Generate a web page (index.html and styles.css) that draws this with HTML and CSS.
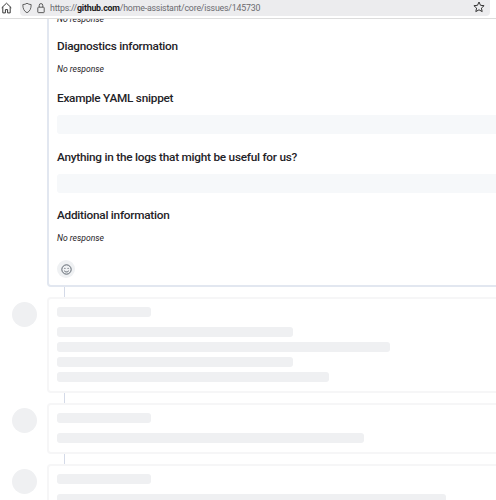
FILE: index.html
```html
<!DOCTYPE html>
<html lang="en">
<head>
<meta charset="utf-8">
<title>Issue 145730</title>
<link rel="stylesheet" href="styles.css">
</head>
<body>
<header class="toolbar">
  <svg class="home" width="11" height="12" viewBox="0 0 11 12" fill="none" stroke="#3a3a3a" stroke-width="1"><path d="M.7 5.800 5.500 1.200l4.800 4.600M1.800 4.900v6h2.600V7.600h2.200v3.300h2.600v-6"/></svg>
  <div class="urlbar">
    <svg class="shield" width="10" height="12" viewBox="0 0 12 13" fill="none" stroke="#555" stroke-width="1.100"><path d="M6 .8c1.300 1 3 1.500 5 1.600 0 4.600-1.300 8-5 9.800C2.300 10.400 1 7 1 2.400 3 2.300 4.700 1.800 6 .8Z"/></svg>
    <svg class="lock" width="8" height="12" viewBox="0 0 10 13" fill="none" stroke="#555" stroke-width="1.200"><rect x="1" y="5.500" width="8" height="6.800" rx=".8"/><path d="M2.800 5.500V3.200a2.200 2.200 0 0 1 4.400 0v2.300"/></svg>
    <span class="url">https://<b>github.com</b>/home-assistant/core/issues/145730</span>
    <svg class="star" width="12" height="12" viewBox="0 0 12 12" fill="none" stroke="#333" stroke-width="1"><path d="m6 1 1.500 3.300 3.600.4-2.700 2.400.8 3.500L6 8.800l-3.200 1.800.8-3.500L.9 4.700l3.600-.4Z"/></svg>
  </div>
</header>
<main class="timeline">
  <article class="card body-card">
    <p class="none clipped">No response</p>
    <h3>Diagnostics information</h3>
    <p class="none">No response</p>
    <h3>Example YAML snippet</h3>
    <div class="code"></div>
    <h3>Anything in the logs that might be useful for us?</h3>
    <div class="code"></div>
    <h3>Additional information</h3>
    <p class="none">No response</p>
    <button class="react" aria-label="Add reaction">
      <svg width="11" height="11" viewBox="0 0 16 16" fill="none" stroke="#57606a" stroke-width="1.400"><circle cx="8" cy="8" r="6.800"/><path d="M5 10.200c.8.900 1.800 1.300 3 1.300s2.200-.4 3-1.300" stroke-linecap="round"/><circle cx="5.700" cy="6.300" r=".9" fill="#57606a" stroke="none"/><circle cx="10.300" cy="6.300" r=".9" fill="#57606a" stroke="none"/></svg>
    </button>
  </article>
  <div class="link"></div>
  <section class="row">
    <div class="avatar"></div>
    <div class="card skel">
      <div class="bar title"></div>
      <div class="lines">
        <div class="bar w236"></div>
        <div class="bar w333"></div>
        <div class="bar w236"></div>
        <div class="bar w272"></div>
      </div>
    </div>
  </section>
  <div class="link"></div>
  <section class="row">
    <div class="avatar"></div>
    <div class="card skel">
      <div class="bar title"></div>
      <div class="lines"><div class="bar w307"></div></div>
    </div>
  </section>
  <div class="link"></div>
  <section class="row">
    <div class="avatar"></div>
    <div class="card skel">
      <div class="bar title"></div>
      <div class="lines"><div class="bar w389"></div></div>
    </div>
  </section>
</main>
</body>
</html>
```
FILE: styles.css
```css
* { box-sizing: border-box; }
html, body { margin: 0; height: 500px; overflow: hidden; background: #fff; }
body { font-family: Roboto, "Noto Sans", sans-serif; color: #1f2328; }
.toolbar {
  position: relative; z-index: 2;
  display: flex; align-items: center; gap: 8px;
  height: 19px; padding: 0 0 3px 1px;
  background: #fff; border-bottom: 1px solid #dcdcdc;
}
.home { flex: none; }
.urlbar {
  flex: 1; display: flex; align-items: center; gap: 5px;
  height: 16px; margin-right: 6px; padding: 0 5px 0 2px;
  background: #ececee; border-radius: 0 0 4px 4px;
}
.shield, .lock { flex: none; }
.url { flex: 1; font: 8.800px Roboto, sans-serif; letter-spacing: -.2px; color: #6a6a6e; white-space: nowrap; overflow: hidden; }
.url b { color: #1c1b22; font-weight: 700; }
.star { flex: none; margin-top: -1px; }
.timeline { height: 492px; margin-top: -11px; padding-left: 47px; overflow: hidden; }
.card { background: #fff; border: 1px solid #e4e7ee; border-radius: 4px; width: 489px; }
.body-card { padding: 0 8px; border-width: 0 1px 2px 2px; border-color: #e2e7f0; height: 279px; border-radius: 0 0 4px 4px; }
.body-card h3 { margin: 0; font-size: 11.800px; line-height: 18px; font-weight: 500; letter-spacing: -.25px; color: #1f2328; }
.none { margin: 0 0 13px; font-size: 8.600px; line-height: 13px; font-style: italic; color: #1f2328; }
.clipped { padding-top: 5px; margin-bottom: 11px; }
h3 + .none { margin-top: 8px; }
h3 + .code { margin-top: 8px; }
.code { height: 19px; background: #f6f8fa; border-radius: 3px; margin-bottom: 13.500px; }
.react {
  display: flex; align-items: center; justify-content: center;
  width: 18px; height: 18px; padding: 0; margin-top: 15px;
  background: #eff1f3; border: 0; border-radius: 50%;
}
.link { width: 1px; height: 10px; margin-left: 17px; background: #d4dae8; }
.row { position: relative; }
.avatar {
  position: absolute; left: -35px; top: 5px;
  width: 25px; height: 25px; border-radius: 50%; background: #eff0f2;
}
.skel { padding: 8px 8px 9px; border: 2px solid #f6f6f7; }
.bar { height: 10px; background: #eff0f2; border-radius: 3px; }
.title { width: 94px; }
.lines { display: flex; flex-direction: column; gap: 5px; margin-top: 10px; }
.w236 { width: 236px; }
.w333 { width: 333px; }
.w272 { width: 272px; }
.w307 { width: 307px; }
.w389 { width: 389px; }
```
